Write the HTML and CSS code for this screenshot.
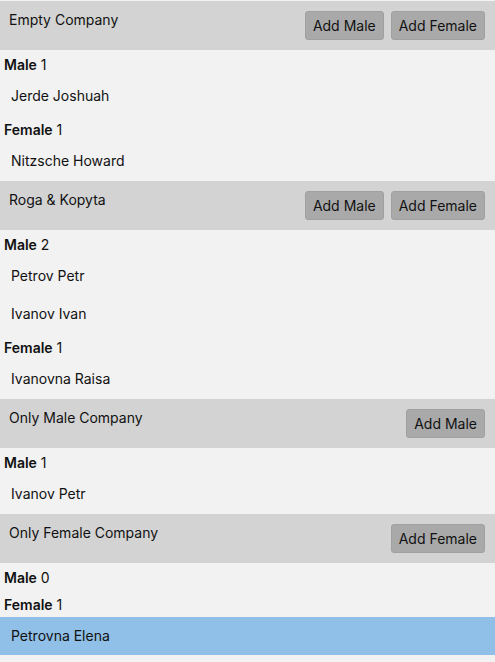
FILE: index.html
```html
<!DOCTYPE html>
<html>
<head>
<meta charset="utf-8">
<link rel="stylesheet" href="styles.css">
</head>
<body>
<div class="list">
  <section class="company">
    <div class="company-head">
      <span class="company-name">Empty Company</span>
      <div class="actions">
        <button class="btn">Add Male</button>
        <button class="btn">Add Female</button>
      </div>
    </div>
    <div class="group-label"><b>Male</b> 1</div>
    <div class="person">Jerde Joshuah</div>
    <div class="group-label"><b>Female</b> 1</div>
    <div class="person">Nitzsche Howard</div>
  </section>
  <section class="company">
    <div class="company-head">
      <span class="company-name">Roga &amp; Kopyta</span>
      <div class="actions">
        <button class="btn">Add Male</button>
        <button class="btn">Add Female</button>
      </div>
    </div>
    <div class="group-label"><b>Male</b> 2</div>
    <div class="person">Petrov Petr</div>
    <div class="person">Ivanov Ivan</div>
    <div class="group-label"><b>Female</b> 1</div>
    <div class="person">Ivanovna Raisa</div>
  </section>
  <section class="company">
    <div class="company-head">
      <span class="company-name">Only Male Company</span>
      <div class="actions">
        <button class="btn">Add Male</button>
      </div>
    </div>
    <div class="group-label"><b>Male</b> 1</div>
    <div class="person">Ivanov Petr</div>
  </section>
  <section class="company">
    <div class="company-head">
      <span class="company-name">Only Female Company</span>
      <div class="actions">
        <button class="btn">Add Female</button>
      </div>
    </div>
    <div class="group-label"><b>Male</b> 0</div>
    <div class="group-label"><b>Female</b> 1</div>
    <div class="person selected">Petrovna Elena</div>
  </section>
</div>
</body>
</html>
```

FILE: styles.css
```css
html, body {
  margin: 0;
  padding: 0;
  background: #f2f2f2;
}
body {
  font-family: Inter, "Noto Sans", sans-serif;
  font-size: 14px;
  color: #111;
}
.list {
  display: flex;
  flex-direction: column;
}
.company {
  margin-top: 1px;
  display: flex;
  flex-direction: column;
}
.company-head {
  background: #d3d3d3;
  height: 49px;
  box-sizing: border-box;
  padding: 10px 10px 10px 9px;
  display: flex;
  justify-content: space-between;
  align-items: flex-start;
}
.company-name {
  line-height: 17px;
}
.actions {
  display: flex;
  gap: 7px;
}
.btn {
  font-family: inherit;
  font-size: 14px;
  color: #111;
  background: #a9a9a9;
  border: 1px solid #a0a0a0;
  border-radius: 3px;
  height: 29px;
  padding: 0 7px;
  line-height: 17px;
}
.group-label {
  padding: 6px 4px 3px;
  line-height: 18px;
}
.group-label b {
  font-weight: 600;
}
.person {
  padding: 10px 11px 10px;
  line-height: 18px;
}
.person.selected {
  background: #90c0e7;
}
```
